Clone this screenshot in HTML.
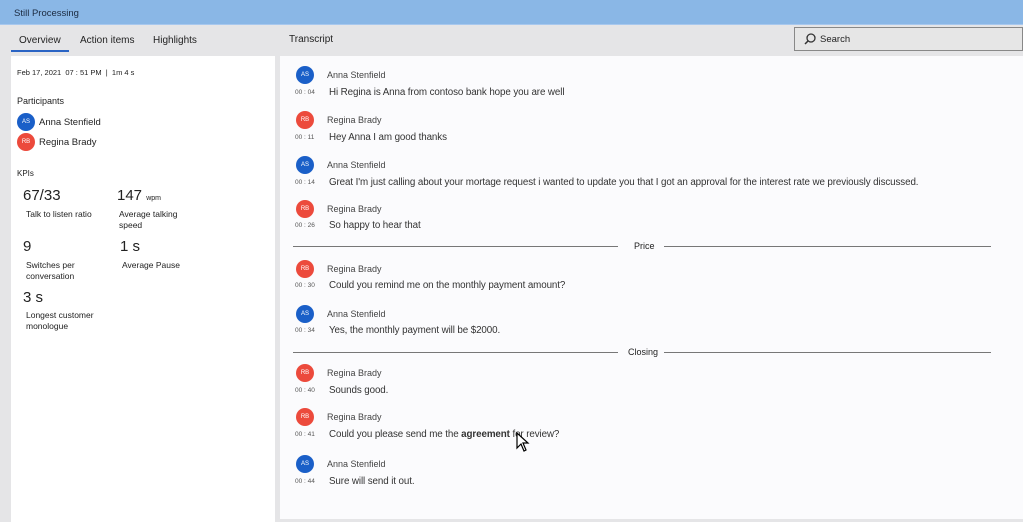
<!DOCTYPE html>
<html><head><style>
*{margin:0;padding:0;box-sizing:border-box}
body{width:1023px;height:522px;background:#e5e5e7;font-family:"Liberation Sans",sans-serif;position:relative;overflow:hidden;color:#222}
.a{position:absolute;white-space:nowrap}
.av{position:absolute;width:18px;height:18px;border-radius:50%;color:#fff;font-size:6px;text-align:center;line-height:18px}
.b{background:#1a5fc8}.r{background:#ec4a3c}
.nm{font-size:9px;color:#444}
.tm{font-size:6.5px;color:#555}
.tx{font-size:9.8px;color:#333;letter-spacing:-0.1px}
.ln{position:absolute;height:1px;background:#777}
</style></head><body>
<div class="a" style="left:0;top:0;width:1023px;height:25px;background:#8ab7e6;border-bottom:1px solid #a8c8ee"></div>
<div class="a" style="left:14px;top:8px;font-size:9.5px;color:#1b2a40">Still Processing</div>
<div class="a" style="left:19px;top:35px;font-size:10px">Overview</div>
<div class="a" style="left:11px;top:50px;width:58px;height:2px;background:#2a64c4"></div>
<div class="a" style="left:80px;top:35px;font-size:10px">Action items</div>
<div class="a" style="left:153px;top:35px;font-size:10px">Highlights</div>
<div class="a" style="left:289px;top:34px;font-size:10px">Transcript</div>
<div class="a" style="left:794px;top:27px;width:229px;height:24px;border:1px solid #888;background:#e6e6e6"></div>
<svg class="a" style="left:803px;top:32px" width="14" height="14" viewBox="0 0 14 14"><circle cx="8" cy="6" r="4" fill="none" stroke="#333" stroke-width="1.3"/><line x1="5" y1="9" x2="2" y2="12" stroke="#333" stroke-width="1.5"/></svg>
<div class="a" style="left:820px;top:34px;font-size:9.5px">Search</div>
<div class="a" style="left:11px;top:56px;width:264px;height:466px;background:#fff"></div>
<div class="a" style="left:280px;top:56px;width:743px;height:463px;background:#fbfbfd"></div>
<div class="a" style="left:17px;top:68px;font-size:7.5px">Feb 17, 2021 &nbsp;07 : 51 PM &nbsp;| &nbsp;1m 4 s</div>
<div class="a" style="left:17px;top:96px;font-size:9px">Participants</div>
<div class="av b" style="left:17px;top:113px">AS</div><div class="a" style="left:39px;top:117px;font-size:9.5px">Anna Stenfield</div>
<div class="av r" style="left:17px;top:133px">RB</div><div class="a" style="left:39px;top:137px;font-size:9.5px">Regina Brady</div>
<div class="a" style="left:17px;top:169px;font-size:8px">KPIs</div>
<div class="a" style="left:23px;top:187px;font-size:15px">67/33</div>
<div class="a" style="left:26px;top:209px;font-size:8.5px">Talk to listen ratio</div>
<div class="a" style="left:117px;top:187px;font-size:15px">147 <span style="font-size:7px">wpm</span></div>
<div class="a" style="left:119px;top:209px;font-size:8.5px;line-height:11px">Average talking<br>speed</div>
<div class="a" style="left:23px;top:238px;font-size:15px">9</div>
<div class="a" style="left:26px;top:260px;font-size:8.5px;line-height:11px">Switches per<br>conversation</div>
<div class="a" style="left:120px;top:238px;font-size:15px">1 s</div>
<div class="a" style="left:122px;top:260px;font-size:8.5px">Average Pause</div>
<div class="a" style="left:23px;top:289px;font-size:15px">3 s</div>
<div class="a" style="left:26px;top:310px;font-size:8.5px;line-height:11px">Longest customer<br>monologue</div>

<div class="av b" style="left:296px;top:66px">AS</div><div class="a nm" style="left:327px;top:70px">Anna Stenfield</div><div class="a tm" style="left:295px;top:89px">00 : 04</div><div class="a tx" style="left:329px;top:87px">Hi Regina is Anna from contoso bank hope you are well</div>
<div class="av r" style="left:296px;top:111px">RB</div><div class="a nm" style="left:327px;top:115px">Regina Brady</div><div class="a tm" style="left:295px;top:134px">00 : 11</div><div class="a tx" style="left:329px;top:132px">Hey Anna I am good thanks</div>
<div class="av b" style="left:296px;top:156px">AS</div><div class="a nm" style="left:327px;top:160px">Anna Stenfield</div><div class="a tm" style="left:295px;top:179px">00 : 14</div><div class="a tx" style="left:329px;top:177px">Great I'm just calling about your mortage request i wanted to update you that I got an approval for the interest rate we previously discussed.</div>
<div class="av r" style="left:296px;top:200px">RB</div><div class="a nm" style="left:327px;top:204px">Regina Brady</div><div class="a tm" style="left:295px;top:222px">00 : 26</div><div class="a tx" style="left:329px;top:220px">So happy to hear that</div>
<div class="ln" style="left:293px;top:246px;width:325px"></div><div class="a" style="left:634px;top:241px;font-size:9px">Price</div><div class="ln" style="left:664px;top:246px;width:327px"></div>
<div class="av r" style="left:296px;top:260px">RB</div><div class="a nm" style="left:327px;top:264px">Regina Brady</div><div class="a tm" style="left:295px;top:282px">00 : 30</div><div class="a tx" style="left:329px;top:280px">Could you remind me on the monthly payment amount?</div>
<div class="av b" style="left:296px;top:305px">AS</div><div class="a nm" style="left:327px;top:309px">Anna Stenfield</div><div class="a tm" style="left:295px;top:327px">00 : 34</div><div class="a tx" style="left:329px;top:325px">Yes, the monthly payment will be $2000.</div>
<div class="ln" style="left:293px;top:352px;width:325px"></div><div class="a" style="left:628px;top:347px;font-size:9px">Closing</div><div class="ln" style="left:664px;top:352px;width:327px"></div>
<div class="av r" style="left:296px;top:364px">RB</div><div class="a nm" style="left:327px;top:368px">Regina Brady</div><div class="a tm" style="left:295px;top:387px">00 : 40</div><div class="a tx" style="left:329px;top:385px">Sounds good.</div>
<div class="av r" style="left:296px;top:408px">RB</div><div class="a nm" style="left:327px;top:412px">Regina Brady</div><div class="a tm" style="left:295px;top:431px">00 : 41</div><div class="a tx" style="left:329px;top:429px">Could you please send me the <b>agreement</b> for review?</div>
<svg class="a" style="left:516px;top:432px" width="14" height="22" viewBox="0 0 14 22"><path d="M1 1 L1 16 L5 12 L8 19 L10 18 L7 11 L12 11 Z" fill="#fff" stroke="#000" stroke-width="1.2"/></svg>
<div class="av b" style="left:296px;top:455px">AS</div><div class="a nm" style="left:327px;top:459px">Anna Stenfield</div><div class="a tm" style="left:295px;top:478px">00 : 44</div><div class="a tx" style="left:329px;top:476px">Sure will send it out.</div>
</body></html>
